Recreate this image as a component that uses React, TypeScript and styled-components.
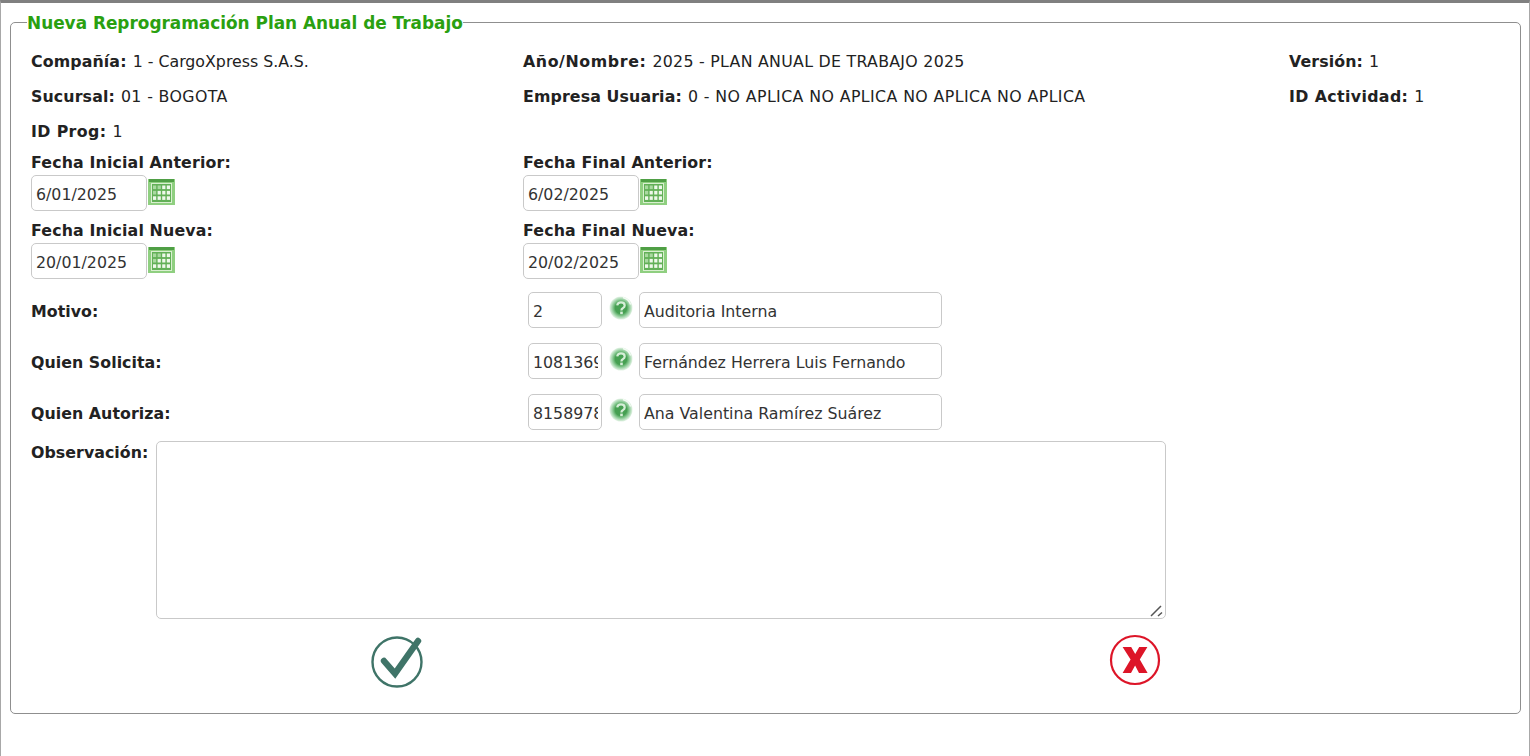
import React, {FC} from 'react';
import styled, {createGlobalStyle} from 'styled-components';

const GlobalStyle = createGlobalStyle`
  html, body {
    margin: 0;
    padding: 0;
    height: 100%;
    background: #fff;
  }
  body {
    font-family: "DejaVu Sans", Verdana, sans-serif;
    font-size: 15.8px;
    color: #222;
    overflow: hidden;
  }
`;

const Frame = styled.div`
  box-sizing: border-box;
  width: 1530px;
  height: 756px;
  border-top: 3px solid #808080;
  border-left: 1px solid #a8a8a8;
  border-right: 1px solid #a8a8a8;
  padding: 7px 9px 0 9px;
`;

const Fieldset = styled.fieldset`
  box-sizing: border-box;
  margin: 0;
  width: 1511px;
  height: 704px;
  padding: 0 0 0 20px;
  border: 1px solid #8f8f8f;
  border-radius: 5px;
  min-inline-size: 0;
`;

const Legend = styled.legend`
  padding: 1px 0 0;
  margin-left: -4px;
  font-size: 16.9px;
  line-height: 24px;
  font-weight: bold;
  color: #2aa010;
`;

const InfoGrid = styled.div`
  display: grid;
  grid-template-columns: 492px 766px 1fr;
  grid-auto-rows: 35px;
  margin-top: 9px;
`;

const Info = styled.div`
  line-height: 35px;
  white-space: nowrap;
`;

const Label = styled.b<{$spacing: number}>`
  font-weight: bold;
  letter-spacing: ${p => p.$spacing}px;
  margin-right: 1px;
`;

const Value = styled.span<{$spacing: number}>`
  letter-spacing: ${p => p.$spacing}px;
`;

const DateGrid = styled.div`
  display: grid;
  grid-template-columns: 492px 1fr;
  grid-auto-rows: 68px;
  margin-top: 5px;
`;

const DateCell = styled.div`
  display: flex;
  flex-direction: column;
`;

const DateLabel = styled.div`
  font-weight: bold;
  letter-spacing: 0.15px;
  line-height: 16px;
  margin-top: 1px;
  margin-bottom: 4px;
`;

const DateControl = styled.div`
  display: flex;
  align-items: flex-start;
  gap: 1px;
`;

const TextInput = styled.input<{$width: number}>`
  box-sizing: border-box;
  width: ${p => p.$width}px;
  height: 36px;
  padding: 3px 3px 0 4px;
  border: 1px solid #c9c9c9;
  border-radius: 5px;
  background: #fff;
  color: #333;
  font-family: "DejaVu Sans", Verdana, sans-serif;
  font-size: 15.8px;
  outline: none;
`;

const LookupRow = styled.div`
  display: grid;
  grid-template-columns: 497px 74px 37px 303px;
  align-items: center;
  height: 36px;
  margin-bottom: 15px;
`;

const RowLabel = styled.div`
  font-weight: bold;
  letter-spacing: 0.05px;
  margin-top: 2px;
`;

const HelpSlot = styled.div`
  display: flex;
  justify-content: center;
  margin-top: -5px;
  margin-right: -1px;
`;

const LookupList = styled.div`
  margin-top: 2px;
`;

const ObservationRow = styled.div`
  display: flex;
  align-items: flex-start;
  margin-top: -4px;
`;

const ObservationLabel = styled.div`
  width: 125px;
  font-weight: bold;
  letter-spacing: 0.05px;
  line-height: 16px;
  margin-top: 4px;
  white-space: nowrap;
`;

const TextAreaWrap = styled.div`
  position: relative;
  width: 1010px;
  height: 178px;
`;

const TextArea = styled.textarea`
  box-sizing: border-box;
  display: block;
  width: 100%;
  height: 100%;
  margin: 0;
  padding: 4px;
  border: 1px solid #c9c9c9;
  border-radius: 5px;
  outline: none;
  font-family: "DejaVu Sans", Verdana, sans-serif;
  font-size: 15.8px;
`;

const Grip = styled.svg`
  position: absolute;
  right: 2px;
  bottom: 2px;
  background: #fff;
  pointer-events: none;
`;

const Actions = styled.div`
  display: flex;
  align-items: flex-start;
  justify-content: space-between;
  box-sizing: border-box;
  width: 1130px;
  padding-left: 340px;
  margin-top: 15px;
`;

const IconButton = styled.button`
  display: block;
  padding: 0;
  margin: 0;
  border: 0;
  background: none;
  cursor: pointer;
  line-height: 0;
`;

const CalendarIcon: FC = () => (
  <svg width="27" height="26" viewBox="0 0 27 26" style={{marginTop: 4}}>
    <rect x="0" y="0" width="27" height="26" fill="#8fcf80" />
    <rect x="1" y="0" width="25" height="3" fill="#4f9f45" />
    <rect x="3" y="4" width="21" height="20" fill="#d9efd0" />
    <rect x="4" y="5" width="19" height="18" fill="#62b057" />
    {[0, 1, 2, 3].map(c =>
      [0, 1, 2].map(r => (
        <rect
          key={`${c}-${r}`}
          x={5 + c * 4.6}
          y={6.5 + r * 5.4}
          width="3.2"
          height="3.6"
          fill={c + r < 2 ? '#a9d9a0' : '#eef8ea'}
        />
      ))
    )}
  </svg>
);

const HelpIcon: FC<{id: string}> = ({id}) => (
  <svg width="24" height="24" viewBox="0 0 24 24">
    <defs>
      <radialGradient id={id} cx="50%" cy="50%" r="50%">
        <stop offset="50%" stopColor="#46a052" />
        <stop offset="72%" stopColor="#8ccb96" />
        <stop offset="100%" stopColor="#e4f3e6" />
      </radialGradient>
    </defs>
    <circle cx="12" cy="12" r="11.5" fill={`url(#${id})`} />
    <path d="M14 1.5a10.5 10.5 0 0 1 7.6 7" fill="none" stroke="#f2faf3" strokeWidth="1.4" />
    <path
      d="M8.2 9.4c.3-2 1.9-3 3.8-3 2.1 0 3.7 1.2 3.7 3 0 1.4-.9 2.1-1.9 2.8-1 .6-1.4 1.1-1.4 2.2"
      fill="none"
      stroke="#d6eed8"
      strokeWidth="2.2"
    />
    <rect x="11.2" y="15.6" width="2.6" height="2.6" fill="#d6eed8" />
  </svg>
);

const AcceptIcon: FC = () => (
  <svg width="54" height="54" viewBox="0 0 54 54">
    <circle cx="26" cy="28" r="24.5" fill="none" stroke="#3f7468" strokeWidth="2.4" />
    <path d="M13 27L24 39.5L47 7" fill="none" stroke="#3f7468" strokeWidth="6.4" strokeLinecap="round" />
  </svg>
);

const CancelIcon: FC = () => (
  <svg width="52" height="52" viewBox="0 0 52 52">
    <circle cx="26" cy="26" r="24" fill="none" stroke="#dd1528" strokeWidth="2.2" />
    <path d="M13.6 13h8.6l4 7 4-7h8.2l-7.6 12.6L38.6 39h-8.6l-3.9-7.4L22 39H13.6l8-13.4z" fill="#dd1528" />
  </svg>
);

const infoItems = [
  {label: 'Compañía:', value: '1 - CargoXpress S.A.S.', labelSpacing: 0.12, valueSpacing: 0},
  {label: 'Año/Nombre:', value: '2025 - PLAN ANUAL DE TRABAJO 2025', labelSpacing: 0.6, valueSpacing: 0.28},
  {label: 'Versión:', value: '1', labelSpacing: 0.12, valueSpacing: 0},
  {label: 'Sucursal:', value: '01 - BOGOTA', labelSpacing: 0.12, valueSpacing: 0.36},
  {label: 'Empresa Usuaria:', value: '0 - NO APLICA NO APLICA NO APLICA NO APLICA', labelSpacing: 0.12, valueSpacing: 0.4},
  {label: 'ID Actividad:', value: '1', labelSpacing: 0.38, valueSpacing: 0},
  {label: 'ID Prog:', value: '1', labelSpacing: 0.38, valueSpacing: 0}
];

const lookups = [
  {label: 'Motivo:', code: '2', name: 'Auditoria Interna'},
  {label: 'Quien Solicita:', code: '1081369', name: 'Fernández Herrera Luis Fernando'},
  {label: 'Quien Autoriza:', code: '8158978', name: 'Ana Valentina Ramírez Suárez'}
];

const dates = [
  {label: 'Fecha Inicial Anterior:', value: '6/01/2025'},
  {label: 'Fecha Final Anterior:', value: '6/02/2025'},
  {label: 'Fecha Inicial Nueva:', value: '20/01/2025'},
  {label: 'Fecha Final Nueva:', value: '20/02/2025'}
];

const App: FC = () => (
  <>
    <GlobalStyle />
    <Frame>
      <Fieldset>
        <Legend>Nueva Reprogramación Plan Anual de Trabajo</Legend>
        <InfoGrid>
          {infoItems.map(item => (
            <Info key={item.label}>
              <Label $spacing={item.labelSpacing}>{item.label}</Label>{' '}
              <Value $spacing={item.valueSpacing}>{item.value}</Value>
            </Info>
          ))}
        </InfoGrid>
        <DateGrid>
          {dates.map(d => (
            <DateCell key={d.label}>
              <DateLabel>{d.label}</DateLabel>
              <DateControl>
                <TextInput $width={116} defaultValue={d.value} />
                <CalendarIcon />
              </DateControl>
            </DateCell>
          ))}
        </DateGrid>
        <LookupList>
          {lookups.map((l, i) => (
            <LookupRow key={l.label}>
              <RowLabel>{l.label}</RowLabel>
              <TextInput $width={74} defaultValue={l.code} />
              <HelpSlot><HelpIcon id={`help-${i}`} /></HelpSlot>
              <TextInput $width={303} defaultValue={l.name} />
            </LookupRow>
          ))}
        </LookupList>
        <ObservationRow>
          <ObservationLabel>Observación:</ObservationLabel>
          <TextAreaWrap>
            <TextArea />
            <Grip width="14" height="14" viewBox="0 0 14 14">
              <path d="M1 13L11 3M8 13l4-3.5" fill="none" stroke="#555" strokeWidth="1.5" />
            </Grip>
          </TextAreaWrap>
        </ObservationRow>
        <Actions>
          <IconButton aria-label="Aceptar"><AcceptIcon /></IconButton>
          <IconButton aria-label="Cancelar"><CancelIcon /></IconButton>
        </Actions>
      </Fieldset>
    </Frame>
  </>
);

export default App;
